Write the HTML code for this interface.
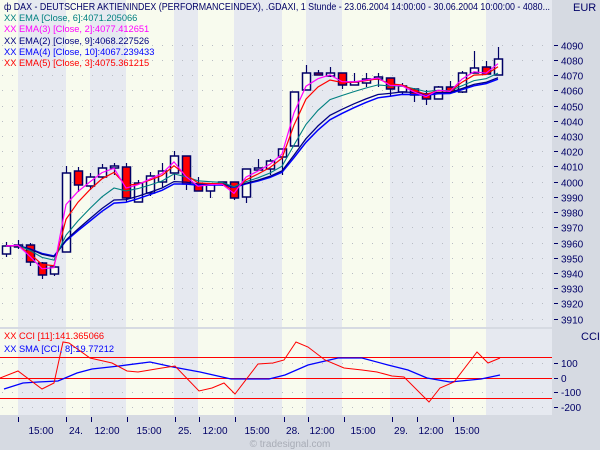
<!DOCTYPE html>
<html><head><meta charset="utf-8"><style>
html,body{margin:0;padding:0;background:#d6dae2;width:600px;height:450px;overflow:hidden}
svg{position:absolute;left:0;top:0}
text{font-family:"Liberation Sans",sans-serif}
</style></head><body>
<svg id="s" width="600" height="450" viewBox="0 0 600 450" xmlns="http://www.w3.org/2000/svg">
<rect x="0" y="0" width="600" height="450" fill="#d6dae2"/>
<g id="bands"></g>
<g id="grid"></g>
<g id="cci"></g>
<g id="candles"></g>
<g id="emas"></g>
<g id="axis"></g>
<text x="4" y="10" fill="#000066" font-size="10.5" textLength="546" lengthAdjust="spacingAndGlyphs">ф DAX - DEUTSCHER AKTIENINDEX (PERFORMANCEINDEX), .GDAXI, 1 Stunde - 23.06.2004 14:00:00 - 30.06.2004 10:00:00 - 4080...</text>
<text x="573" y="11" fill="#000066" font-size="11">EUR</text>
<g font-size="9.3">
<text x="4" y="21" fill="#008080">XX EMA [Close, 6]:4071.205066</text>
<text x="4" y="32" fill="#ff00ff">XX EMA(3) [Close, 2]:4077.412651</text>
<text x="4" y="44" fill="#000080">XX EMA(2) [Close, 9]:4068.227526</text>
<text x="4" y="55" fill="#0000ff">XX EMA(4) [Close, 10]:4067.239433</text>
<text x="4" y="66" fill="#ff0000">XX EMA(5) [Close, 3]:4075.361215</text>
<text x="4" y="339" fill="#ff0000">XX CCI [11]:141.365066</text>
<text x="4" y="352" fill="#0000ff">XX SMA [CCI, 8]:19.77212</text>
</g>
<text x="581" y="340" fill="#000066" font-size="11">CCI</text>
<g font-size="10" fill="#000066" text-anchor="middle">
<text x="41" y="434">15:00</text><text x="76" y="434">24.</text><text x="107" y="434">12:00</text>
<text x="149" y="434">15:00</text><text x="185" y="434">25.</text><text x="215" y="434">12:00</text>
<text x="257" y="434">15:00</text><text x="293" y="434">28.</text><text x="322" y="434">12:00</text>
<text x="363" y="434">15:00</text><text x="401" y="434">29.</text><text x="431" y="434">12:00</text>
<text x="467" y="434">15:00</text>
</g>
<text x="290" y="447" font-size="10" fill="#a8acb6" text-anchor="middle">© tradesignal.com</text>
</svg>
<script>
var NS="http://www.w3.org/2000/svg";
function el(p,t,a){var e=document.createElementNS(NS,t);for(var k in a)e.setAttribute(k,a[k]);document.getElementById(p).appendChild(e);return e;}
var b=[0,18,66,90,126,174,198,234,282,306,342,390,450,486,552];
for(var i=0;i<b.length-1;i++){
 var c=i%2==0?"#f8fbee":"#e6e9f0";
 el("bands","rect",{x:b[i],y:0,width:b[i+1]-b[i],height:327,fill:c});
 el("bands","rect",{x:b[i],y:329,width:b[i+1]-b[i],height:86,fill:c});
}
function py(p){return 44.7+(4090-p)*1.522;}
for(var p=3910;p<=4090;p+=10){var y=Math.round(py(p))+0.5;
 el("grid","line",{x1:2,x2:552,y1:y,y2:y,stroke:"#b8bcc4","stroke-dasharray":"1 9"});
 el("axis","line",{x1:554,x2:558,y1:y,y2:y,stroke:"#000066"});
 var t=el("axis","text",{x:561,y:y+4,"font-size":"10",fill:"#000066"});t.textContent=p;}
[[363,"100"],[378,"0"],[392,"-100"],[407,"-200"]].forEach(function(a){
 el("grid","line",{x1:2,x2:552,y1:a[0]+.5,y2:a[0]+.5,stroke:"#b8bcc4","stroke-dasharray":"1 9"});
 el("axis","line",{x1:554,x2:558,y1:a[0]+.5,y2:a[0]+.5,stroke:"#000066"});
 var t=el("axis","text",{x:561,y:a[0]+4,"font-size":"10",fill:"#000066"});t.textContent=a[1];});
[357,378,398].forEach(function(y){el("grid","line",{x1:0,x2:552,y1:y+.5,y2:y+.5,stroke:"#ff0000"});});
[18,66,91,127,175,199,235,284,308,344,392,417,453].forEach(function(x){el("axis","line",{x1:x+.5,x2:x+.5,y1:417,y2:422,stroke:"#000066"});});
var C=[[254,246,242,257],[247,245,240,249],[245,262,243,266],[263,275,262,279],[274,267,265,276],
[252,173,166,252],[171,185,167,192],[186,177,173,190],[177,168,164,178],[168,166,163,175],
[167,198,163,202],[202,183,180,202],[193,176,172,196],[182,171,163,187],[173,156,151,180],
[156,184,156,190],[184,191,177,191],[191,184,184,198],[182,184,182,186],[182,198,182,200],
[197,169,169,203],[170,168,159,170],[169,161,159,175],[157,149,149,175],[146,92,92,146],
[90,73,65,90],[73,75,70,75],[76,73,67,77],[73,85,73,89],[85,82,73,85],[83,79,73,87],[79,77,73,87],
[78,89,78,96],[92,86,83,95],[89,95,88,102],[94,99,90,105],[99,87,86,99],[87,92,81,92],
[92,73,71,93],[73,68,51,73],[67,74,61,74],[75,59,47,75]];
var closes=[];
C.forEach(function(c,i){var x=6+12*i;closes.push(c[1]);
 el("candles","line",{x1:x+.5,x2:x+.5,y1:c[2],y2:c[3],stroke:"#000066","stroke-width":1.2});
 var top=Math.min(c[0],c[1]),h=Math.max(Math.abs(c[0]-c[1]),1);
 el("candles","rect",{x:x-3.5,y:top,width:8,height:h,fill:c[1]>c[0]?"#ff0000":"#fbfdf4",stroke:"#000066","stroke-width":1.5});
});
function ema(n,col,w){var a=2/(n+1),v=0,pts=[];
 closes.forEach(function(c,i){v=i==0?c:v+a*(c-v);pts.push((6+12*i)+","+v.toFixed(1));});
 el("emas","polyline",{points:pts.join(" "),fill:"none",stroke:col,"stroke-width":w});}
ema(10,"#0000ff",1.5);ema(9,"#000080",1.3);ema(6,"#008080",1.1);ema(3,"#ff0000",1.2);ema(2,"#ff00ff",1.2);
el("cci","polyline",{points:"4,389 23,383 38,382 58,381 77,373 92,369 119,366 150,362 173,367 200,372 231,379 269,379 285,375 308,365 338,358 362,358 388,365 408,370 427,378 450,382 481,379 500,375",fill:"none",stroke:"#0000ff","stroke-width":1.3});
el("cci","polyline",{points:"0,378 18,371 42,389 54,383 63,342 69,343 90,358 112,363 127,371 138,372 162,368 175,366 199,391 212,388 224,383 235,394 258,364 273,363 284,360 296,342 308,347 325,360 344,368 362,370 377,372 392,376 404,377 429,402 440,388 454,382 477,352 488,363 500,358",fill:"none",stroke:"#ff0000","stroke-width":1});
</script>
</body></html>
